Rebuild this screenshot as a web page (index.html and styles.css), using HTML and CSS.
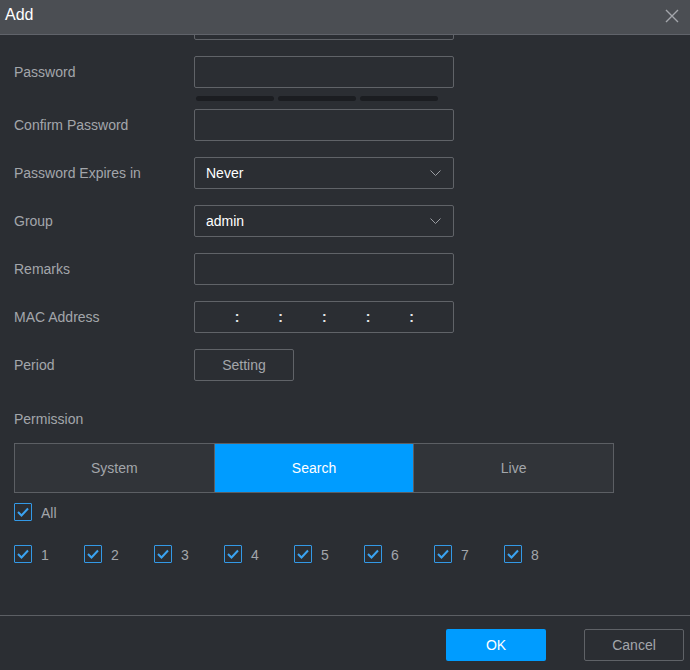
FILE: index.html
```html
<!DOCTYPE html>
<html>
<head>
<meta charset="utf-8">
<link rel="stylesheet" href="styles.css">
</head>
<body>
<div class="dialog">
  <div class="header">
    <span class="title">Add</span>
    <svg class="close" width="14" height="14" viewBox="0 0 14 14"><path d="M1 1L13 13M13 1L1 13" stroke="#a3a6ab" stroke-width="1.4" fill="none"/></svg>
  </div>
  <div class="content">
    <div class="inner">
      <div class="row"><span class="label"></span><div class="field"></div></div>
      <div class="row tight"><span class="label">Password</span><div class="field"></div></div>
      <div class="strength"><span class="bar"></span><span class="bar"></span><span class="bar"></span></div>
      <div class="row"><span class="label">Confirm Password</span><div class="field"></div></div>
      <div class="row"><span class="label">Password Expires in</span><div class="field select"><span class="value">Never</span><svg class="chev" width="11" height="7" viewBox="0 0 11 7"><path d="M0.5 0.5L5.5 5.5L10.5 0.5" stroke="#9a9da2" stroke-width="1" fill="none"/></svg></div></div>
      <div class="row"><span class="label">Group</span><div class="field select"><span class="value">admin</span><svg class="chev" width="11" height="7" viewBox="0 0 11 7"><path d="M0.5 0.5L5.5 5.5L10.5 0.5" stroke="#9a9da2" stroke-width="1" fill="none"/></svg></div></div>
      <div class="row"><span class="label">Remarks</span><div class="field"></div></div>
      <div class="row"><span class="label">MAC Address</span><div class="field mac"><span class="seg"></span><span class="colon">:</span><span class="seg"></span><span class="colon">:</span><span class="seg"></span><span class="colon">:</span><span class="seg"></span><span class="colon">:</span><span class="seg"></span><span class="colon">:</span><span class="seg"></span></div></div>
      <div class="row"><span class="label">Period</span><div class="btn-setting">Setting</div></div>
      <div class="perm-label">Permission</div>
      <div class="tabs">
        <div class="tab">System</div>
        <div class="tab active">Search</div>
        <div class="tab">Live</div>
      </div>
      <div class="all-row">
        <label class="check"><span class="box"><svg width="12" height="10" viewBox="0 0 12 10"><path d="M1 5L4.5 8.5L11 1.5" stroke="#3ba3f2" stroke-width="2" fill="none"/></svg></span><span class="ctext">All</span></label>
      </div>
      <div class="num-row">
        <label class="check item"><span class="box"><svg width="12" height="10" viewBox="0 0 12 10"><path d="M1 5L4.5 8.5L11 1.5" stroke="#3ba3f2" stroke-width="2" fill="none"/></svg></span><span class="ctext">1</span></label>
        <label class="check item"><span class="box"><svg width="12" height="10" viewBox="0 0 12 10"><path d="M1 5L4.5 8.5L11 1.5" stroke="#3ba3f2" stroke-width="2" fill="none"/></svg></span><span class="ctext">2</span></label>
        <label class="check item"><span class="box"><svg width="12" height="10" viewBox="0 0 12 10"><path d="M1 5L4.5 8.5L11 1.5" stroke="#3ba3f2" stroke-width="2" fill="none"/></svg></span><span class="ctext">3</span></label>
        <label class="check item"><span class="box"><svg width="12" height="10" viewBox="0 0 12 10"><path d="M1 5L4.5 8.5L11 1.5" stroke="#3ba3f2" stroke-width="2" fill="none"/></svg></span><span class="ctext">4</span></label>
        <label class="check item"><span class="box"><svg width="12" height="10" viewBox="0 0 12 10"><path d="M1 5L4.5 8.5L11 1.5" stroke="#3ba3f2" stroke-width="2" fill="none"/></svg></span><span class="ctext">5</span></label>
        <label class="check item"><span class="box"><svg width="12" height="10" viewBox="0 0 12 10"><path d="M1 5L4.5 8.5L11 1.5" stroke="#3ba3f2" stroke-width="2" fill="none"/></svg></span><span class="ctext">6</span></label>
        <label class="check item"><span class="box"><svg width="12" height="10" viewBox="0 0 12 10"><path d="M1 5L4.5 8.5L11 1.5" stroke="#3ba3f2" stroke-width="2" fill="none"/></svg></span><span class="ctext">7</span></label>
        <label class="check item"><span class="box"><svg width="12" height="10" viewBox="0 0 12 10"><path d="M1 5L4.5 8.5L11 1.5" stroke="#3ba3f2" stroke-width="2" fill="none"/></svg></span><span class="ctext">8</span></label>
      </div>
    </div>
  </div>
  <div class="footer">
    <div class="btn ok">OK</div>
    <div class="btn cancel">Cancel</div>
  </div>
</div>
</body>
</html>
```
FILE: styles.css
```css
* { box-sizing: border-box; }
html, body { margin: 0; padding: 0; }
body {
  width: 690px;
  height: 670px;
  background: #2b2e33;
  font-family: "Liberation Sans", Arial, sans-serif;
  font-size: 14px;
  color: #a3a6ab;
  overflow: hidden;
}
.dialog {
  width: 690px;
  height: 670px;
  display: flex;
  flex-direction: column;
}
.header {
  height: 35px;
  flex: none;
  background: #4b4e53;
  border-bottom: 1px solid #60636a;
  display: flex;
  align-items: center;
  justify-content: space-between;
  padding: 0 11px 4px 5px;
}
.title {
  color: #ffffff;
  font-size: 16px;
}
.close { display: block; margin-top: 2px; }
.content {
  flex: 1;
  overflow: hidden;
  padding-left: 14px;
}
.inner {
  margin-top: -27px;
}
.row {
  display: flex;
  align-items: center;
  height: 32px;
  margin-bottom: 16px;
}
.row.tight { margin-bottom: 0; }
.label {
  width: 180px;
  flex: none;
  color: #a3a6ab;
}
.field {
  width: 260px;
  height: 32px;
  border: 1px solid #606368;
  border-radius: 2px;
  background: #2b2e33;
}
.select {
  display: flex;
  align-items: center;
  justify-content: space-between;
  padding: 0 12px 0 11px;
}
.select .value { color: #ffffff; }
.chev { display: block; }
.strength {
  display: flex;
  gap: 4px;
  margin: 8px 0 8px 182px;
}
.bar {
  width: 78px;
  height: 5px;
  border-radius: 3px;
  background: #1b1d21;
}
.mac {
  display: flex;
  align-items: center;
}
.seg { width: 40px; }
.colon {
  width: 4px;
  text-align: center;
  color: #e6e7e9;
  font-weight: bold;
}
.btn-setting {
  width: 100px;
  height: 32px;
  border: 1px solid #606368;
  border-radius: 2px;
  display: flex;
  align-items: center;
  justify-content: center;
  color: #a3a6ab;
}
.perm-label {
  height: 32px;
  display: flex;
  align-items: center;
  margin-top: 22px;
}
.tabs {
  display: flex;
  width: 600px;
  height: 50px;
  margin-top: 8px;
  border: 1px solid #5c5f64;
  background: #313439;
}
.tab {
  flex: 1;
  display: flex;
  align-items: center;
  justify-content: center;
  color: #a3a6ab;
  border-left: 1px solid #5c5f64;
}
.tab:first-child { border-left: none; }
.tab.active {
  background: #009cff;
  color: #ffffff;
}
.all-row {
  margin-top: 9px;
  height: 19px;
  display: flex;
  align-items: center;
}
.num-row {
  margin-top: 23px;
  height: 19px;
  display: flex;
  align-items: center;
}
.check {
  display: flex;
  align-items: center;
}
.check.item { width: 70px; }
.box {
  width: 18px;
  height: 18px;
  border: 1px solid #3399e6;
  border-radius: 1px;
  display: flex;
  align-items: center;
  justify-content: center;
}
.box svg { display: block; }
.ctext {
  margin-left: 9px;
  font-size: 14px;
  color: #a3a6ab;
  margin-top: 3px;
}
.footer {
  flex: none;
  height: 55px;
  border-top: 1px solid #5c5f64;
  display: flex;
  align-items: center;
  justify-content: flex-end;
  gap: 38px;
  padding: 4px 6px 0 0;
}
.btn {
  width: 100px;
  height: 32px;
  display: flex;
  align-items: center;
  justify-content: center;
  border-radius: 2px;
}
.ok {
  background: #009cff;
  color: #ffffff;
}
.cancel {
  border: 1px solid #5f6267;
  color: #a3a6ab;
}
```
